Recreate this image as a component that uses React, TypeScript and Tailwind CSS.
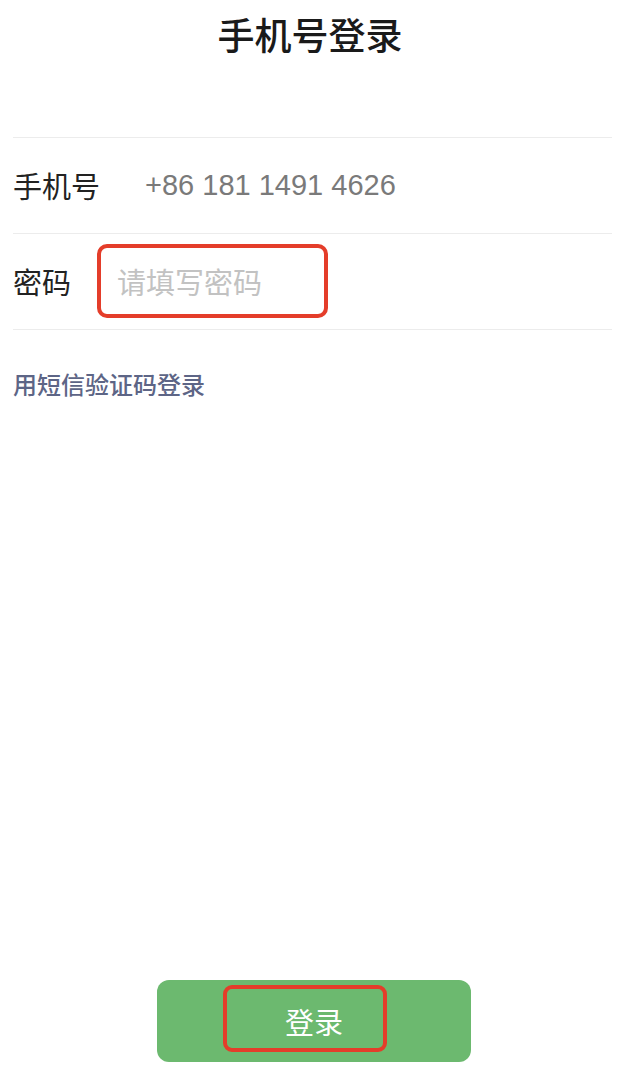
import React from 'react';

const cjk = "font-['Noto_Sans_CJK_SC',sans-serif]";

const App: React.FC = () => {
  return (
    <div className={`h-[1073px] bg-white flex flex-col ${cjk}`}>
      <div className="h-[68px] flex items-center justify-center">
        <h1 className="text-[37px] leading-none font-medium text-[#1a1a1a]">手机号登录</h1>
      </div>

      <div className="mt-[69px] ml-[13px] mr-[8px]">
        <div className="h-[96px] border-t border-[#ececec] flex items-center">
          <span className="w-[132px] text-[29px] leading-none text-[#222]">手机号</span>
          <span className="font-['Liberation_Sans',sans-serif] text-[29px] leading-none text-[#7a7a7a]">
            +86 181 1491 4626
          </span>
        </div>
        <div className="h-[96px] border-t border-[#ececec] flex items-center">
          <span className="w-[84px] text-[29px] leading-none text-[#222]">密码</span>
          <div className="w-[231px] h-[74px] mt-[-1px] border-4 border-[#e43d2a] rounded-[10px] flex items-center pl-[16px]">
            <span className="text-[29px] leading-none text-[#c2c2c2]">请填写密码</span>
          </div>
        </div>
        <div className="border-t border-[#ececec]" />
      </div>

      <div className="ml-[13px] mt-[38px]">
        <span className="text-[24px] leading-[32px] font-medium text-[#5d6586]">用短信验证码登录</span>
      </div>

      <div className="mt-auto mb-[11px] pl-[157px]">
        <button className="relative w-[314px] h-[82px] rounded-[12px] bg-[#6cb96f] flex items-center justify-center">
          <span className="text-[29px] leading-none text-white">登录</span>
          <span className="absolute left-[66px] top-[5px] w-[164px] h-[67px] border-4 border-[#e43d2a] rounded-[9px]" />
        </button>
      </div>
    </div>
  );
};

export default App;
